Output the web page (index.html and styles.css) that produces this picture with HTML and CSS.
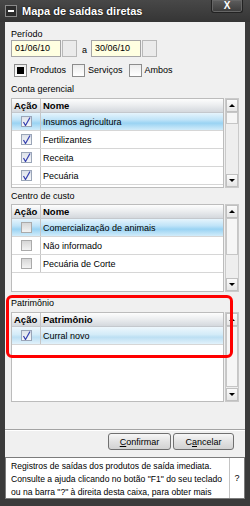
FILE: index.html
```html
<!DOCTYPE html>
<html lang="pt-br">
<head>
  <meta charset="UTF-8" />
  <title>Mapa de saídas diretas</title>
  <link rel="stylesheet" href="styles.css">
</head>
<body>
  <div class="window">
    <div class="titlebar">
      <span class="sysmenu"></span>
      <span class="title">Mapa de saídas diretas</span>
      <span class="close">X</span>
    </div>

    <div class="panel">
      <div class="form">
        <div class="label">Período</div>
        <div class="dates">
          <span class="date">01/06/10</span><span class="date-btn"></span>
          <span class="sep">a</span>
          <span class="date">30/06/10</span><span class="date-btn"></span>
        </div>
        <div class="options">
          <span class="opt"><span class="box on"></span>Produtos</span>
          <span class="opt"><span class="box"></span>Serviços</span>
          <span class="opt"><span class="box"></span>Ambos</span>
        </div>

        <div class="label label-conta">Conta gerencial</div>
        <div class="grid">
          <div class="grid-main">
            <div class="row head"><div class="c1">Ação</div><div class="c2">Nome</div></div>
            <div class="row sel"><div class="c1"><span class="chk"><svg width="9" height="9" viewBox="0 0 9 9"><polyline points="1.5,5 3.5,8.5 8,0.5" /></svg></span></div><div class="c2">Insumos agricultura</div></div>
            <div class="row"><div class="c1"><span class="chk"><svg width="9" height="9" viewBox="0 0 9 9"><polyline points="1.5,5 3.5,8.5 8,0.5" /></svg></span></div><div class="c2">Fertilizantes</div></div>
            <div class="row"><div class="c1"><span class="chk"><svg width="9" height="9" viewBox="0 0 9 9"><polyline points="1.5,5 3.5,8.5 8,0.5" /></svg></span></div><div class="c2">Receita</div></div>
            <div class="row"><div class="c1"><span class="chk"><svg width="9" height="9" viewBox="0 0 9 9"><polyline points="1.5,5 3.5,8.5 8,0.5" /></svg></span></div><div class="c2">Pecuária</div></div>
            <div class="row"><div class="c1"></div><div class="c2"></div></div>
          </div>
          <div class="scroll">
            <div class="arrow up"></div>
            <div class="track"><div class="thumb thumb-small"></div></div>
            <div class="arrow down"></div>
          </div>
        </div>

        <div class="label label-centro">Centro de custo</div>
        <div class="grid grid-short">
          <div class="grid-main">
            <div class="row head"><div class="c1">Ação</div><div class="c2">Nome</div></div>
            <div class="row sel"><div class="c1"><span class="chk off"></span></div><div class="c2">Comercialização de animais</div></div>
            <div class="row"><div class="c1"><span class="chk off"></span></div><div class="c2">Não informado</div></div>
            <div class="row"><div class="c1"><span class="chk off"></span></div><div class="c2">Pecuária de Corte</div></div>
          </div>
          <div class="scroll">
            <div class="arrow up"></div>
            <div class="track"><div class="thumb thumb-mid"></div></div>
            <div class="arrow down"></div>
          </div>
        </div>

        <div class="label label-patrimonio">Patrimônio</div>
        <div class="grid">
          <div class="grid-main">
            <div class="row head"><div class="c1">Ação</div><div class="c2">Patrimônio</div></div>
            <div class="row sel light"><div class="c1"><span class="chk"><svg width="9" height="9" viewBox="0 0 9 9"><polyline points="1.5,5 3.5,8.5 8,0.5" /></svg></span></div><div class="c2">Curral novo</div></div>
          </div>
          <div class="scroll">
            <div class="arrow up"></div>
            <div class="track"><div class="thumb thumb-full"></div></div>
            <div class="arrow down"></div>
          </div>
        </div>
      </div>

      <div class="footer">
        <div class="buttons">
          <button class="btn btn-confirm"><u>C</u>onfirmar</button>
          <button class="btn btn-cancel">C<u>a</u>ncelar</button>
        </div>
        <div class="help">
          <div class="help-text">Registros de saídas dos produtos de saída imediata.<br>Consulte a ajuda clicando no botão "F1" do seu teclado<br>ou na barra "?" à direita desta caixa, para obter mais</div>
          <div class="help-q">?</div>
        </div>
      </div>
    </div>

    <div class="mark"></div>
  </div>
</body>
</html>
```

FILE: styles.css
```css
* {
  box-sizing: border-box;
}

body {
  margin: 0;
  font-family: "Liberation Sans", Arial, sans-serif;
  font-size: 9px;
  color: #000;
  background: #3b3b3b;
}

.window {
  position: relative;
  width: 250px;
  height: 506px;
  background: #3b3b3b;
  display: flex;
  flex-direction: column;
  padding-bottom: 7px;
}

/* barra de titulo */
.titlebar {
  height: 22px;
  flex-shrink: 0;
  display: flex;
  align-items: center;
  padding-left: 5px;
  background: linear-gradient(#484848, #353535);
}

.sysmenu {
  width: 12px;
  height: 12px;
  border: 1px solid #8a8a8a;
  background: #2c2c2c;
  display: flex;
  align-items: center;
  justify-content: center;
}

.sysmenu::before {
  content: "";
  width: 6px;
  height: 2px;
  background: #fff;
}

.title {
  margin-left: 5px;
  color: #fff;
  font-weight: bold;
  font-size: 11px;
  text-shadow: 0 0 2px #000;
}

.close {
  align-self: flex-start;
  margin-left: auto;
  margin-right: 7px;
  width: 32px;
  height: 13px;
  border: 1px solid #222;
  border-top: none;
  border-radius: 0 0 3px 3px;
  background: linear-gradient(#5e5e5e, #3a3a3a);
  box-shadow: inset 0 0 0 1px #666;
  color: #fff;
  font-weight: bold;
  font-size: 10px;
  line-height: 12px;
  text-align: center;
}

/* corpo */
.panel {
  flex: 1;
  margin: 0 5px;
  background: #f0f0f0;
  display: flex;
  flex-direction: column;
}

.form {
  flex: 1;
  padding: 7px 6px 0 6px;
}

.label {
  height: 11px;
  line-height: 11px;
}

.label-conta { margin-top: 7px; }
.label-centro { margin-top: 3px; }
.label-patrimonio { margin-top: 6px; }

.dates {
  display: flex;
  align-items: center;
  height: 17px;
}

.date {
  width: 50px;
  height: 17px;
  border: 1px solid #a5a5a5;
  background: #ffffe1;
  padding-left: 3px;
  line-height: 15px;
}

.date-btn {
  width: 15px;
  height: 17px;
  margin-left: 1px;
  border: 1px solid #b8b8b8;
  background: #ebebeb;
}

.sep {
  margin: 3px 4px 0 5px;
}

.options {
  display: flex;
  align-items: center;
  height: 14px;
  margin-top: 6px;
  padding-left: 3px;
}

.opt {
  display: flex;
  align-items: center;
  margin-right: 6px;
}

.box {
  width: 13px;
  height: 13px;
  margin-right: 3px;
  border: 1px solid #8c8c8c;
  background: linear-gradient(#ececec, #fff);
  display: flex;
  align-items: center;
  justify-content: center;
}

.box.on::before {
  content: "";
  width: 7px;
  height: 7px;
  background: #000;
}

/* grades */
.grid {
  display: flex;
  height: 90px;
  margin-top: 3px;
}

.grid-short {
  height: 88px;
  margin-top: 2px;
}

.grid-main {
  flex: 1;
  border: 1px solid #bcbcbc;
  background: #fff;
  overflow: hidden;
}

.row {
  display: flex;
  height: 18px;
  border-bottom: 1px solid #d6d6d6;
}

.c1 {
  width: 29px;
  border-right: 1px solid #c6c6c6;
  display: flex;
  align-items: center;
  justify-content: center;
}

.c2 {
  flex: 1;
  padding-left: 2px;
  display: flex;
  align-items: center;
  white-space: nowrap;
}

.head {
  height: 14px;
  font-weight: bold;
  font-size: 9.5px;
  background: linear-gradient(#fdfdfd, #eceef0 45%, #d4d8dd);
  border-bottom: 1px solid #c4c8cd;
}

.head .c1 {
  justify-content: flex-start;
  padding-left: 2px;
}

.sel {
  background: linear-gradient(#e6f4fc, #bfe3f8 40%, #9ad3f3 60%, #d2ecfa);
}

.sel.light {
  background: linear-gradient(#eef7fc, #d3ebf8 45%, #bcdff3 60%, #e2f2fb);
}

.chk {
  width: 11px;
  height: 11px;
  border: 1px solid #9aa5b7;
  background: linear-gradient(#dde2ea, #f6f7f9);
  display: flex;
  align-items: center;
  justify-content: center;
}

.chk svg polyline {
  fill: none;
  stroke: #3540b0;
  stroke-width: 1.2;
}

.chk.off {
  border-color: #aaaaaa;
  background: linear-gradient(#d6d6d6, #f3f3f3);
}

/* barra de rolagem */
.scroll {
  width: 14px;
  margin-left: 1px;
  border: 1px solid #cacaca;
  background: #eeeeee;
  display: flex;
  flex-direction: column;
}

.arrow {
  height: 13px;
  border: 1px solid #c0c0c0;
  background: linear-gradient(#fbfbfb, #e6e6e6);
  display: flex;
  align-items: center;
  justify-content: center;
}

.arrow::before {
  content: "";
  border-left: 3px solid transparent;
  border-right: 3px solid transparent;
}

.arrow.up::before { border-bottom: 3px solid #000; }
.arrow.down::before { border-top: 3px solid #000; }

.track {
  flex: 1;
}

.thumb {
  border: 1px solid #c6c6c6;
  background: #f6f6f6;
}

.thumb-small { height: 12px; }
.thumb-mid { height: 37px; }
.thumb-full { height: 61px; }

/* rodape */
.footer {
  border-top: 1px solid #a3a3a3;
  box-shadow: inset 0 1px #fff;
}

.buttons {
  display: flex;
  justify-content: flex-end;
  gap: 2px;
  padding: 3px 11px 7px 0;
}

.btn {
  height: 17px;
  padding: 0;
  border: 1px solid #707070;
  border-radius: 3px;
  background: linear-gradient(#f7f7f7, #e2e2e2 50%, #d2d2d2);
  font: inherit;
  color: #000;
}

.btn-confirm { width: 63px; }
.btn-cancel { width: 61px; }

.help {
  height: 42px;
  display: flex;
  background: #fff;
  border: 1px solid #7c7c7c;
}

.help-text {
  flex: 1;
  padding: 2px 0 0 5px;
  font-size: 8.6px;
  line-height: 13px;
  white-space: nowrap;
  overflow: hidden;
  border-right: 1px solid #c4c4c4;
}

.help-q {
  width: 14px;
  display: flex;
  align-items: center;
  justify-content: center;
}

/* destaque vermelho */
.mark {
  position: absolute;
  left: 6px;
  top: 295px;
  width: 227px;
  height: 63px;
  border: 3px solid #f00;
  border-radius: 6px;
  pointer-events: none;
}
```
